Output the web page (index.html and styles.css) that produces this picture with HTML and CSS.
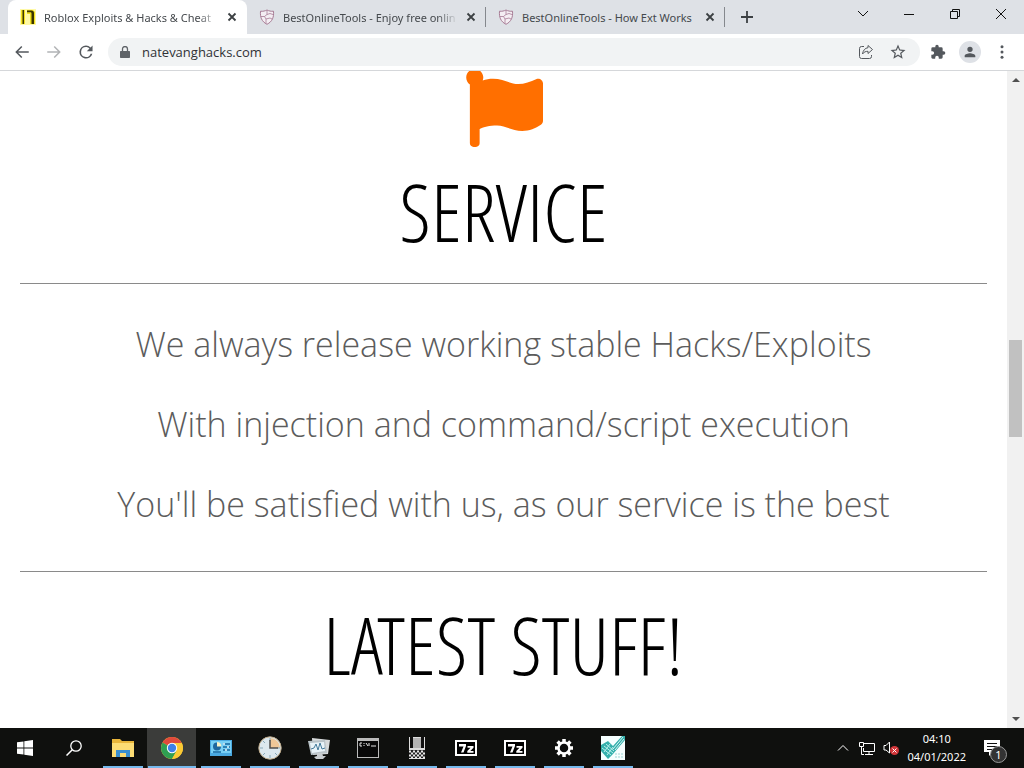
FILE: index.html
```html
<!DOCTYPE html>
<html lang="en">
<head>
    <meta charset="UTF-8">
    <meta name="viewport" content="width=device-width, initial-scale=1.0">
    <title>Roblox Exploits &amp; Hacks &amp; Cheats</title>
    <link rel="stylesheet" href="styles.css">
</head>
<body>
    <!-- Shared shapes -->
    <svg class="defs" width="0" height="0" aria-hidden="true">
        <symbol id="x" viewBox="0 0 10 10"><path d="M1.5 1.5l7 7M8.5 1.5l-7 7" stroke="#3c4043" stroke-width="1.8"/></symbol>
        <symbol id="shield" viewBox="0 0 16 16" fill="none" stroke="#a77b94">
            <path d="M8 1c2 1 4 1.500 6.500 1.200C15 8 13.500 12.500 8 15.300 2.500 12.500 1 8 1.500 2.200 4 2.500 6 2 8 1z" fill="#f4eef3"/>
            <path d="M8 1.500v4L5.500 7.500H2M8 5.500l3-1 3 1M5.500 7.500L7 10v4.500M7 10l4-1 2 1" stroke-width=".8"/>
        </symbol>
        <symbol id="sevenzip" viewBox="0 0 22 16">
            <path d="M0 0h22v16H0z" fill="#fff"/>
            <path d="M2 2h18v12H2z" fill="#000"/>
            <path d="M4 4h7v2L8.500 12.500H6L8.500 6.500H4zM12.500 6h6v1.800L15.300 11h3.200v1.800h-6.200V11l3.200-3.200h-3z" fill="#fff"/>
        </symbol>
    </svg>

    <header class="browser">
        <div class="tab-strip">
            <div class="tabs">
                <div class="tab active">
                    <svg class="favicon" viewBox="0 0 16 16"><path d="M0 0h16v16H0z" fill="#fff9a5"/><path d="M1 1h4v14H1zM7 1h6l2 2v12h-5V5H7z" fill="#f1df1c"/><path d="M2.500 1H4v14H2.500zM7 1.500h4.500c1.500 0 2.500 1 2.500 2.500v11h-2.500V4.500c0-.8-.5-1.200-1.200-1.200H7z" fill="#3b3500"/></svg>
                    <span class="tab-title">Roblox Exploits &amp; Hacks &amp; Cheat</span>
                    <button class="tab-close" aria-label="Close tab"><svg><use href="#x"/></svg></button>
                </div>
                <div class="tab">
                    <svg class="favicon"><use href="#shield"/></svg>
                    <span class="tab-title">BestOnlineTools - Enjoy free onlin</span>
                    <button class="tab-close" aria-label="Close tab"><svg><use href="#x"/></svg></button>
                </div>
                <div class="tab">
                    <svg class="favicon"><use href="#shield"/></svg>
                    <span class="tab-title fits">BestOnlineTools - How Ext Works</span>
                    <button class="tab-close" aria-label="Close tab"><svg><use href="#x"/></svg></button>
                </div>
                <button class="new-tab" aria-label="New tab"><svg viewBox="0 0 12 12"><path d="M6 0v12M0 6h12" stroke="#3c4043" stroke-width="1.800"/></svg></button>
            </div>
            <div class="window-buttons">
                <button aria-label="Search tabs"><svg viewBox="0 0 12 12"><path d="M1 3l5 5 5-5"/></svg></button>
                <button aria-label="Minimize"><svg viewBox="0 0 12 12"><path d="M1 6.500h10"/></svg></button>
                <button aria-label="Restore"><svg viewBox="0 0 12 12"><path d="M1.500 3.500h7v7h-7zM3.500 3.500v-2h7v7h-2"/></svg></button>
                <button aria-label="Close"><svg viewBox="0 0 12 12"><path d="M1 1l10 10M11 1L1 11"/></svg></button>
            </div>
        </div>
        <div class="toolbar">
            <button class="tool" aria-label="Back"><svg viewBox="0 0 24 24"><path d="M21 11H6.830l5.590-5.590L11 4l-8 8 8 8 1.410-1.410L6.830 13H21z"/></svg></button>
            <button class="tool disabled" aria-label="Forward" disabled><svg viewBox="0 0 24 24"><path d="M13 4l-1.410 1.410L17.170 11H3v2h14.170l-5.580 5.590L13 20l8-8z"/></svg></button>
            <button class="tool" aria-label="Reload"><svg viewBox="1 1 22 22"><path d="M17.650 6.350A7.960 7.960 0 0 0 12 4a8 8 0 1 0 7.730 10h-2.080A6 6 0 1 1 12 6c1.660 0 3.140.69 4.220 1.780L13 11h7V4z"/></svg></button>
            <div class="address-bar">
                <svg class="lock" viewBox="0 0 10 12"><path d="M1 5h8c.6 0 1 .4 1 1v5c0 .6-.4 1-1 1H1c-.6 0-1-.4-1-1V6c0-.6.400-1 1-1z" fill="#5f6368"/><path d="M2.500 5V3a2.500 2.500 0 0 1 5 0v2" fill="none" stroke="#5f6368" stroke-width="1.300"/></svg>
                <input type="text" value="natevanghacks.com" aria-label="Address">
                <button class="tool" aria-label="Share"><svg class="share" viewBox="0 0 16 16"><path d="M6 2.500H3.500a2 2 0 0 0-2 2v8a2 2 0 0 0 2 2h8a2 2 0 0 0 2-2V11M10 1.500l4.500 4-4.500 4V7.300C7.500 7.300 6 8 4.500 10 5 6.500 7 4 10 3.700z"/></svg></button>
                <button class="tool" aria-label="Bookmark"><svg viewBox="0 0 24 24"><path d="M22 9.240l-7.190-.62L12 2 9.190 8.630 2 9.240l5.460 4.730L5.820 21 12 17.270 18.180 21l-1.630-7.030zM12 15.400l-3.760 2.270 1-4.280-3.320-2.880 4.380-.38L12 6.100l1.710 4.040 4.380.38-3.320 2.880 1 4.280z"/></svg></button>
            </div>
            <button class="tool" aria-label="Extensions"><svg class="puzzle" viewBox="0 0 24 24"><path d="M20.500 11H19V7a2 2 0 0 0-2-2h-4V3.500a2.500 2.500 0 0 0-5 0V5H4a2 2 0 0 0-2 2v3.800h1.500a2.700 2.700 0 0 1 0 5.400H2V20c0 1.100.9 2 2 2h3.800v-1.500a2.700 2.700 0 0 1 5.400 0V22H17a2 2 0 0 0 2-2v-4h1.500a2.500 2.500 0 0 0 0-5z"/></svg></button>
            <button class="tool profile" aria-label="Profile"><svg viewBox="0 0 24 24"><path d="M12 12a4 4 0 1 0 0-8 4 4 0 0 0 0 8zm0 2c-2.670 0-8 1.340-8 4v2h16v-2c0-2.660-5.330-4-8-4z"/></svg></button>
            <button class="tool" aria-label="Menu"><svg viewBox="0 0 24 24"><circle cx="12" cy="5" r="2"/><circle cx="12" cy="12" r="2"/><circle cx="12" cy="19" r="2"/></svg></button>
        </div>
    </header>

    <div class="viewport">
        <main class="page">
            <svg class="flag" viewBox="0 0 512 512"><path d="M349.565 98.783C295.978 98.783 251.721 64 184.348 64c-24.955 0-47.309 4.384-68.045 12.013a55.947 55.947 0 0 0 3.586-23.562C118.117 24.015 94.806 1.206 66.338.048 34.345-1.254 8 24.296 8 56c0 19.026 9.497 35.825 24 45.945V488c0 13.255 10.745 24 24 24h16c13.255 0 24-10.745 24-24v-94.400c28.311-12.064 63.582-22.122 114.435-22.122 53.588 0 97.844 34.783 165.217 34.783 48.169 0 86.667-16.294 122.505-40.858C506.840 359.452 512 349.571 512 339.045v-243.100c0-23.393-24.269-38.870-45.485-29.016-34.338 15.948-76.454 31.854-116.950 31.854z"/></svg>
            <h1>SERVICE</h1>
            <hr>
            <div class="lines">
                <p>We always release working stable Hacks/Exploits</p>
                <p>With injection and command/script execution</p>
                <p>You'll be satisfied with us, as our service is the best</p>
            </div>
            <hr>
            <h1>LATEST STUFF!</h1>
        </main>
        <div class="scrollbar">
            <svg viewBox="0 0 8 4"><path d="M0 4l4-4 4 4z"/></svg>
            <div class="track"><div class="thumb"></div></div>
            <svg viewBox="0 0 8 4"><path d="M0 0l4 4 4-4z"/></svg>
        </div>
    </div>

    <footer class="taskbar">
        <button class="task" aria-label="Start"><svg viewBox="0 0 16 16" class="small"><path d="M0 2.300L6.500 1.400v6.200H0zM7.300 1.300L16 0v7.600H7.300zM0 8.400h6.500v6.200L0 13.700zM7.300 8.400H16V16l-8.700-1.300z" fill="#fff"/></svg></button>
        <button class="task" aria-label="Search"><svg viewBox="0 0 16 16" class="small"><circle cx="10" cy="6" r="5.200" fill="none" stroke="#fff" stroke-width="1.300"/><path d="M6.300 9.700L.5 15.500" stroke="#fff" stroke-width="1.500"/></svg></button>
        <button class="task open" aria-label="File Explorer"><svg viewBox="0 0 24 24"><path d="M1 3h8l2 2h12v16H1z" fill="#e8b53a"/><path d="M1 7h22v14H1z" fill="#fcdc74"/><path d="M5 14h14v7h-4v-4H9v4H5z" fill="#3a8fd0"/></svg></button>
        <button class="task open current" aria-label="Google Chrome"><svg viewBox="0 0 24 24"><circle cx="12" cy="12" r="11" fill="#fbc934"/><path d="M12 12L2.500 6.500A11 11 0 0 1 21.500 6.500z" fill="#e04a3c"/><path d="M12 12L2.500 6.500A11 11 0 0 0 12 23l4.800-8.300z" fill="#2f9f52"/><path d="M12 7h9.800A11 11 0 0 1 12 23l5-9z" fill="#fbc934"/><circle cx="12" cy="12" r="5.200" fill="#fff"/><circle cx="12" cy="12" r="4.200" fill="#3f80e8"/></svg></button>
        <button class="task open" aria-label="Control Panel"><svg viewBox="0 0 24 24"><path d="M1 4h22v16H1z" fill="#4aa9e0"/><path d="M2 5h20v12H2z" fill="#78d0f5"/><circle cx="8" cy="10.500" r="4" fill="#1f679f"/><path d="M8 10.500V6a4.500 4.500 0 0 1 4.300 4.500z" fill="#f8f2c8"/><path d="M14 8h7M14 11h7M14 14h7M4 16h8" stroke="#17679f" stroke-width="1.300"/><path d="M15 7v2M19 10v2M17 13v2" stroke="#e8faff" stroke-width="1.500"/></svg></button>
        <button class="task open" aria-label="Clock"><svg viewBox="0 0 24 24"><circle cx="12" cy="12" r="11.200" fill="#dce8ee" stroke="#bda988"/><path d="M12 12V2a10 10 0 0 1 10 10z" fill="#efc797"/><path d="M12 2v3M12 19v3M2 12h3M19 12h3M5 5l2 2M17 17l2 2M5 19l2-2" stroke="#88a9b9"/><path d="M12 4v8h8" fill="none" stroke="#4d4d4d" stroke-width="1.500"/></svg></button>
        <button class="task open" aria-label="Resource Monitor"><svg viewBox="0 0 24 24"><path d="M5 2l18 2-2 14-15 1z" fill="#d7dadb"/><path d="M1 5l17-1 2 13-16 2z" fill="#b9c3c8"/><path d="M3 7l14-1 1 9-13 2z" fill="#e8f3f8"/><path d="M4 13l3-1 2-4 2 6 2-7 2 6 3-1" fill="none" stroke="#467b9b"/><path d="M10 17h5l1 3h3l-3 3H9l-2-2 3-1z" fill="#c8cdd0"/></svg></button>
        <button class="task open" aria-label="Command Prompt"><svg viewBox="0 0 24 24"><path d="M1 2h22v20H1z" fill="#bbb"/><path d="M2 5h20v16H2z" fill="#080808"/><path d="M6 7H4v3h2M8 7v1M8 9v1M10 7l2 3M13 7v3M15 10h5" fill="none" stroke="#e5e5e5"/></svg></button>
        <button class="task open" aria-label="Device tool"><svg viewBox="0 0 24 24"><path d="M4 1h16v22H4z" fill="#ddd"/><path d="M5 1h3v11H5zM16 1h3v11h-3z" fill="#111"/><path d="M8 2h8v10H8z" fill="#b5b5b5"/><path d="M4 14h16v8H4z" fill="#222"/><path d="M4 15.500h16M4 19.500h16" stroke="#e8e8e8" stroke-width="2" stroke-dasharray="2 2"/><path d="M6 17.500h14M6 21.500h14" stroke="#e8e8e8" stroke-width="2" stroke-dasharray="2 2"/></svg></button>
        <button class="task open" aria-label="7-Zip"><svg class="zip"><use href="#sevenzip"/></svg></button>
        <button class="task open" aria-label="7-Zip"><svg class="zip"><use href="#sevenzip"/></svg></button>
        <button class="task open" aria-label="Settings"><svg viewBox="0 0 24 24"><g stroke="#fff" stroke-width="3.500"><path d="M12 3v18M3 12h18M5.600 5.600l12.800 12.800M18.400 5.600L5.600 18.400"/></g><circle cx="12" cy="12" r="5.500" fill="#0c0d0d" stroke="#fff" stroke-width="2.500"/></svg></button>
        <button class="task open" aria-label="Tool"><svg viewBox="0 0 24 24"><path d="M0 0h24v24H0z" fill="#f6ffff"/><path d="M0 9l7-4 5 5L21 0h3v4L12 18l-5 5-7-8z" fill="#35b0ac"/><path d="M1 12l9 7M3 10l9 7M5 8l8 7M3 16l6-8M6 19l6-8" stroke="#b5efec"/><path d="M12 13L22 1M14 14l9-11" stroke="#d5f5f4"/><path d="M14 18h8M14 21h8" stroke="#9fd7d5" stroke-dasharray="2 1"/></svg></button>

        <div class="tray">
            <svg class="chevron" viewBox="0 0 12 12"><path d="M1 8.500l5-5 5 5"/></svg>
            <svg class="network" viewBox="0 0 16 14"><path d="M5 2.500h10.500v8H4.500V7M10 10.500v3M6 13.500h8M.5 1.500h4v4h-4zM2.500 5.500v8H5"/></svg>
            <svg class="sound" viewBox="0 0 16 14"><path d="M1 4.500h2l3.500-3.500v11L3 9H1z"/><circle cx="11.500" cy="9.500" r="4.500" fill="#d13438" stroke="none"/><path d="M9.500 7.500l4 4M13.500 7.500l-4 4"/></svg>
            <div class="clock"><span>04:10</span><span>04/01/2022</span></div>
            <div class="notifications">
                <svg viewBox="0 0 16 16"><path d="M0 0h16v12H9l-4 4v-4H0z" fill="#fff"/><path d="M3 3.500h10M3 6.500h10M3 9.500h7" stroke="#111"/></svg>
                <span class="badge">1</span>
            </div>
        </div>
    </footer>
</body>
</html>
```
FILE: styles.css
```css
:root {
    --strip-bg: #dee1e6;
    --field-bg: #f1f3f4;
    --icon: #54585d;
    --accent-color: #ff6f00;
    --taskbar-bg: #0f100e;
    --task-line: #76b9ed;
}

* {
    margin: 0;
    padding: 0;
    box-sizing: border-box;
}

body {
    height: 100vh;
    display: flex;
    flex-direction: column;
    overflow: hidden;
    font-family: "Noto Sans", "Open Sans", sans-serif;
    font-size: 11px;
    background-color: #fff;
}

button {
    border: 0;
    background: none;
    display: flex;
    align-items: center;
    justify-content: center;
    flex-shrink: 0;
}

.defs {
    position: absolute;
}

/* Browser */
.browser {
    flex-shrink: 0;
    border-bottom: 1px solid #d5d7da;
}

.tab-strip {
    height: 34px;
    display: flex;
    justify-content: space-between;
    background-color: var(--strip-bg);
}

.tabs {
    display: flex;
    min-width: 0;
    padding-left: 8px;
}

.tab {
    width: 239px;
    min-width: 0;
    display: flex;
    align-items: center;
    gap: 8px;
    padding: 0 10px 0 12px;
    color: #45494d;
    background: linear-gradient(#85888d, #85888d) right center / 1px 20px no-repeat;
}

.tab.active {
    background: #fff;
    border-radius: 8px 8px 0 0;
}

.favicon {
    width: 16px;
    height: 16px;
    flex-shrink: 0;
}

.tab-title {
    flex: 1;
    white-space: nowrap;
    mask-image: linear-gradient(to right, #000 88%, transparent);
}

.tab-title.fits {
    mask-image: none;
}

.tab-close svg {
    width: 10px;
    height: 10px;
}

.new-tab {
    width: 44px;
}

.new-tab svg {
    width: 12px;
    height: 12px;
}

.window-buttons {
    display: flex;
    padding-bottom: 6px;
}

.window-buttons button {
    width: 46px;
}

.window-buttons svg {
    width: 12px;
    height: 12px;
    fill: none;
    stroke: #111;
}

.toolbar {
    height: 36px;
    display: flex;
    align-items: center;
    gap: 4px;
    padding: 0 8px;
    background-color: #fff;
}

.tool {
    width: 28px;
    height: 28px;
}

.tool svg {
    width: 18px;
    height: 18px;
    fill: var(--icon);
}

.tool .share,
.tool .puzzle {
    width: 16px;
    height: 16px;
}

.tool .share {
    fill: none;
    stroke: var(--icon);
}

.tool.disabled {
    opacity: 0.45;
}

.profile svg {
    width: 22px;
    height: 22px;
    padding: 3px;
    border-radius: 50%;
    background-color: var(--strip-bg);
}

.address-bar {
    flex: 1;
    min-width: 0;
    height: 28px;
    display: flex;
    align-items: center;
    gap: 4px;
    padding: 0 8px 0 12px;
    margin-left: 4px;
    border-radius: 14px;
    background-color: var(--field-bg);
}

.lock {
    width: 10px;
    height: 12px;
}

.address-bar input {
    flex: 1;
    min-width: 0;
    padding-left: 8px;
    border: 0;
    outline: 0;
    background: none;
    color: #303236;
    font-family: "Open Sans", sans-serif;
    font-size: 13px;
}

/* Page */
.viewport {
    flex: 1;
    min-height: 0;
    display: flex;
}

.page {
    flex: 1;
    min-width: 0;
    overflow: hidden;
    padding: 0 20px;
    text-align: center;
}

.flag {
    display: block;
    width: 78px;
    height: 78px;
    margin: -2px auto 0;
    fill: var(--accent-color);
}

.page h1 {
    font-family: "Open Sans Condensed Light", "Open Sans Condensed", "Open Sans", sans-serif;
    font-size: 80px;
    font-weight: 300;
    line-height: 112px;
    margin: 8px 0 16px;
    color: #000;
}

.page hr {
    border: 0;
    border-top: 1px solid #8a8a8a;
}

.page hr + h1 {
    margin-top: 16px;
}

.lines {
    padding: 20px 0 27px;
}

.lines p {
    font-family: "Open Sans", sans-serif;
    font-size: 34px;
    font-weight: 300;
    line-height: 80px;
    color: #5c5c5c;
}

.scrollbar {
    width: 17px;
    display: flex;
    flex-direction: column;
    align-items: center;
    padding: 7px 0;
    background-color: #f1f1f1;
}

.scrollbar svg {
    width: 8px;
    height: 4px;
    fill: #505050;
}

.track {
    flex: 1;
    width: 13px;
    display: flex;
    flex-direction: column;
}

.track::before {
    content: "";
    flex: 258;
}

.track::after {
    content: "";
    flex: 280;
}

.thumb {
    flex: 97;
    background-color: #c1c1c1;
}

/* Taskbar */
.taskbar {
    height: 40px;
    flex-shrink: 0;
    display: flex;
    background-color: var(--taskbar-bg);
}

.task {
    width: 49px;
}

.task svg {
    width: 24px;
    height: 24px;
}

.task .small {
    width: 16px;
    height: 16px;
}

.task .zip {
    width: 22px;
    height: 16px;
}

.task.open {
    background: linear-gradient(var(--task-line), var(--task-line)) center bottom / 40px 2px no-repeat;
}

.task.current {
    background: linear-gradient(var(--task-line), var(--task-line)) center bottom / 48px 2px no-repeat, #3b3c3a;
}

.tray {
    display: flex;
    align-items: center;
    margin-left: auto;
    color: #fff;
}

.tray svg {
    fill: none;
    stroke: #fff;
}

.chevron {
    width: 12px;
    height: 12px;
    margin-right: 10px;
}

.network,
.sound {
    width: 16px;
    height: 14px;
    margin-right: 8px;
}

.clock {
    display: flex;
    flex-direction: column;
    align-items: center;
    line-height: 18px;
}

.notifications {
    position: relative;
    width: 58px;
    height: 40px;
    display: flex;
    align-items: center;
    padding-left: 18px;
}

.notifications svg {
    width: 16px;
    height: 16px;
    stroke: none;
}

.badge {
    position: absolute;
    left: 24px;
    top: 18px;
    width: 17px;
    height: 17px;
    border: 1px solid #999;
    border-radius: 50%;
    background-color: #333;
    line-height: 15px;
    text-align: center;
}
```
